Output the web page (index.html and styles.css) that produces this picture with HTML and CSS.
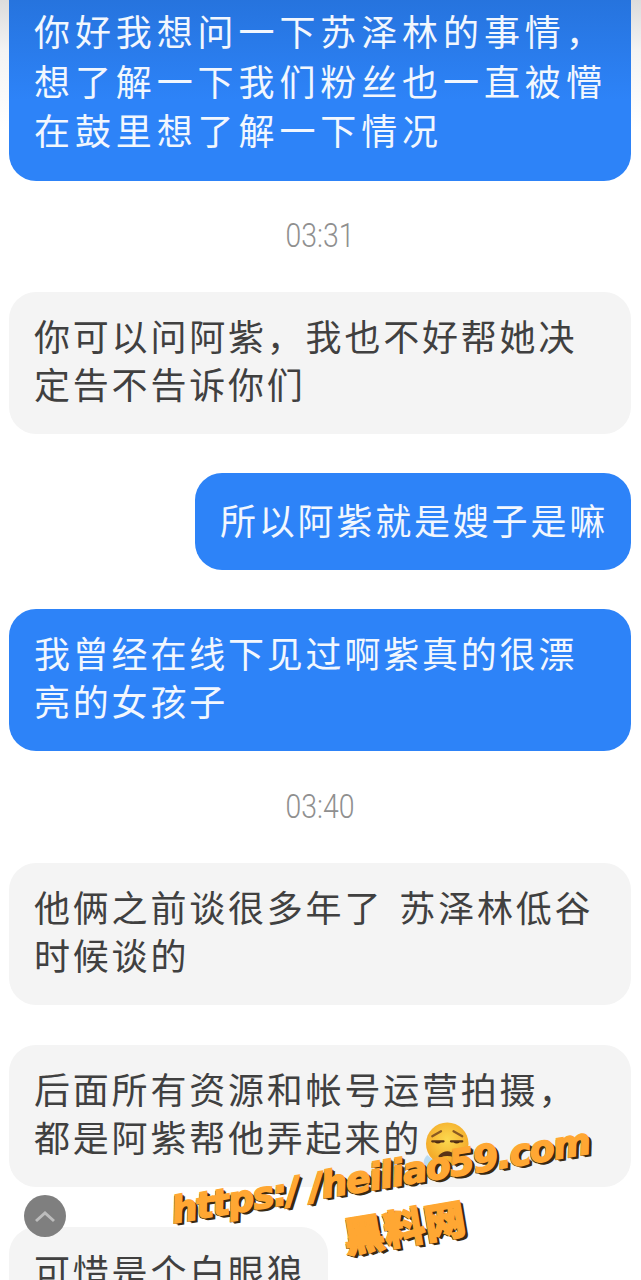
FILE: index.html
```html
<!DOCTYPE html>
<html lang="zh">
<head>
<meta charset="utf-8">
<title>聊天记录</title>
<link rel="stylesheet" href="styles.css">
</head>
<body>
<main class="chat">
  <div class="bubble sent wide first">你好我想问一下苏泽林的事情，<br>想了解一下我们粉丝也一直被懵<br>在鼓里想了解一下情况</div>
  <div class="time"><span class="time-label">03:31</span></div>
  <div class="bubble recv">你可以问阿紫，我也不好帮她决<br>定告不告诉你们</div>
  <div class="bubble sent short">所以阿紫就是嫂子是嘛</div>
  <div class="bubble sent before-time">我曾经在线下见过啊紫真的很漂<br>亮的女孩子</div>
  <div class="time"><span class="time-label">03:40</span></div>
  <div class="bubble recv gap-40">他俩之前谈很多年了<span class="tight">&nbsp;&nbsp;</span>苏泽林低谷<br>时候谈的</div>
  <div class="bubble recv gap-40">后面所有资源和帐号运营拍摄，<br>都是阿紫帮他弄起来的<svg class="emoji" viewBox="0 0 40 40" aria-hidden="true"><defs><radialGradient id="face" cx="0.5" cy="0.4" r="0.6"><stop offset="0" stop-color="#fcd94f"/><stop offset="1" stop-color="#f3a626"/></radialGradient></defs><path d="M5 28c-3 3-4 7-1 9 3 1 7 0 8-3z" fill="#bcdcf2"/><circle cx="21" cy="19" r="17" fill="url(#face)"/><path d="M9 13l7-4M33 13l-7-4" stroke="#8a5a22" stroke-width="1.8" fill="none" stroke-linecap="round"/><path d="M9 17h9M24 17h9" stroke="#5a3416" stroke-width="1.8" fill="none" stroke-linecap="round"/><path d="M11 17.500a3 3 0 0 0 5 0zM26 17.500a3 3 0 0 0 5 0z" fill="#4a2a12"/><path d="M15 29q6-6 12 0q-6-2.500-12 0z" fill="#5a3416" stroke="#5a3416" stroke-width="2" stroke-linejoin="round"/></svg></div>
  <div class="bubble recv fit">可惜是个白眼狼</div>
</main>
<button class="top-btn" type="button" aria-label="回到顶部">
  <svg viewBox="0 0 24 14" width="24" height="14" aria-hidden="true"><path d="M3 12l9-8 9 8" fill="none" stroke="#bdbdbd" stroke-width="3"/></svg>
</button>
<div class="mark">
  <div class="mark-url">https:/ /heiliao59.com</div>
  <div class="mark-name">黑料网</div>
</div>
</body>
</html>
```
FILE: styles.css
```css
html, body {
  margin: 0;
  padding: 0;
  height: 1280px;
  overflow: hidden;
  background: #fff;
}
body {
  position: relative;
  background: linear-gradient(#dcdcdc 0, #f3f3f3 50px, #fff 130px) no-repeat;
  font-family: "Noto Sans CJK SC", "Noto Sans", sans-serif;
}
.chat {
  display: flex;
  flex-direction: column;
  align-items: stretch;
  margin-top: -30px;
  padding: 0 10px 0 9px;
}
.bubble {
  box-sizing: border-box;
  height: 142px;
  padding: 19px 25px 0;
  border-radius: 27px;
  font-size: 36px;
  font-weight: 400;
  line-height: 48px;
  letter-spacing: 2.8px;
  white-space: nowrap;
  margin-bottom: 39px;
  overflow: hidden;
}
.sent {
  background: #2d83f8;
  color: #f2f7fe;
}
.first {
  background: linear-gradient(#246fd6 0, #2d83f8 130px);
  height: 211px;
  padding-top: 36px;
  line-height: 49.5px;
  margin-bottom: 0;
}
.wide {
  letter-spacing: 4.9px;
}
.recv {
  background: #f4f4f4;
  color: #404040;
}
.tight {
  letter-spacing: 0;
}
.short {
  align-self: flex-end;
  height: 97px;
  padding: 22px 20px 0 25px;
  width: 436px;
}
.before-time {
  margin-bottom: 1px;
}
.gap-40 {
  margin-bottom: 40px;
}
.fit {
  align-self: flex-start;
  width: 319px;
  height: 120px;
  margin-bottom: 0;
}
.time {
  height: 111px;
  line-height: 110px;
  text-align: center;
  font-family: "Roboto", sans-serif;
  font-size: 33px;
  font-weight: 300;
  color: #8f8f8f;
}
.time-label {
  display: inline-block;
  transform: scaleX(0.86);
}
.emoji {
  width: 50px;
  height: 50px;
  margin: -10px 0 -10px -1px;
  vertical-align: -8px;
}
.top-btn {
  position: absolute;
  left: 24px;
  top: 1195px;
  width: 42px;
  height: 42px;
  padding: 0;
  border: 0;
  border-radius: 50%;
  background: #7f7f7f;
  display: flex;
  align-items: center;
  justify-content: center;
}
.mark {
  position: absolute;
  left: 150px;
  top: 1152px;
  width: 470px;
  text-align: center;
  transform: rotate(-9.5deg);
  font-family: "DejaVu Sans", "Noto Sans CJK SC", sans-serif;
  font-weight: 700;
  color: #ffa733;
  -webkit-text-stroke: 1.6px #ffa733;
  text-shadow: 1px 1px 0 #3a2a10, 2px 2px 0 #3a2a10, 3px 3px 0 #3a2a10, -1px 1px 0 #3a2a10;
}
.mark-url {
  font-size: 36.5px;
  line-height: 48px;
  white-space: nowrap;
  font-style: italic;
  letter-spacing: -1.2px;
}
.mark-name {
  font-family: "Noto Sans CJK SC", sans-serif;
  font-weight: 900;
  font-size: 41px;
  line-height: 56px;
  padding-left: 30px;
}
```
